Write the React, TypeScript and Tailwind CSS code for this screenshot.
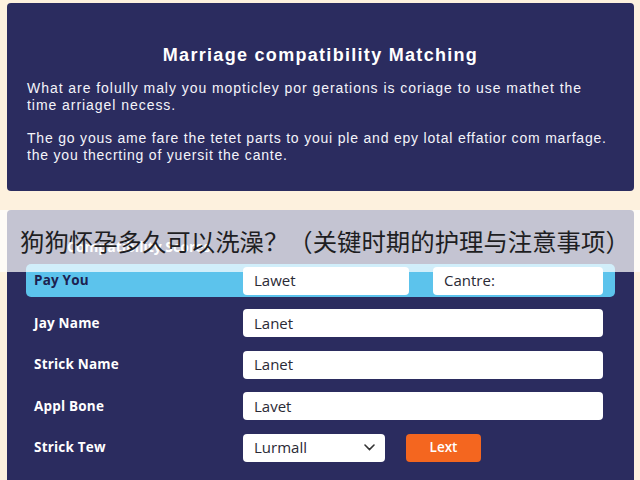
import React from "react";

const sans = { fontFamily: '"Liberation Sans", Arial, sans-serif' };
const ui = { fontFamily: '"Open Sans", "Liberation Sans", sans-serif' };
const cjk = { fontFamily: '"Noto Sans CJK SC", "Noto Sans", sans-serif' };

function Field({ value, className = "" }: { value: string; className?: string }) {
  return (
    <div
      className={`h-[28px] rounded-[4px] bg-white pl-[11px] flex items-center text-[15px] text-[#2a2a35] ${className}`}
      style={ui}
    >
      {value}
    </div>
  );
}

function Row({ label, children }: { label: string; children: React.ReactNode }) {
  return (
    <div className="flex items-center h-[28px] pl-[8px]">
      <div className="w-[209px] text-[13.5px] font-bold text-white tracking-[0.2px]" style={ui}>
        {label}
      </div>
      {children}
    </div>
  );
}

export default function App() {
  return (
    <div className="relative w-[640px] h-[480px] overflow-hidden bg-[#fdf1de] pl-[7px] pr-[6px] pt-[3px]">
      {/* intro card */}
      <div className="h-[188px] rounded-[4px] bg-[#2b2c5f] px-[20px] pt-[41px] text-white">
        <h1 className="text-center text-[18px] font-bold leading-[22px] tracking-[1.3px]" style={sans}>
          Marriage compatibility Matching
        </h1>
        <p
          className="mt-[14px] text-[14px] leading-[17px] tracking-[0.95px] whitespace-nowrap text-[#f4f4fa]"
          style={sans}
        >
          What are folully maly you mopticley por gerations is coriage to use mathet the
          <br />
          time arriagel necess.
        </p>
        <p
          className="mt-[16px] text-[14px] leading-[17px] tracking-[0.8px] whitespace-nowrap text-[#f4f4fa]"
          style={sans}
        >
          The go yous ame fare the tetet parts to youi ple and epy lotal effatior com marfage.
          <br />
          the you thecrting of yuersit the cante.
        </p>
      </div>

      {/* form card */}
      <div className="mt-[19px] h-[300px] rounded-[4px] bg-[#2b2c5f] px-[19px] pt-[26px]">
        <div className="pl-[41px] text-[14px] font-bold text-white h-[28px]" style={ui}>
          Compatibility Scores
        </div>
        <div className="flex items-center h-[33px] rounded-[5px] bg-[#5cc3ec] pl-[8px] pr-[12px]">
          <div className="w-[209px] text-[13.5px] font-bold text-[#1d2150] tracking-[0.2px]" style={ui}>
            Pay You
          </div>
          <Field value="Lawet" className="w-[166px]" />
          <Field value="Cantre:" className="ml-[24px] flex-1" />
        </div>
        <div className="mt-[12px] pr-[12px] flex flex-col gap-[13.5px]">
          <Row label="Jay Name">
            <Field value="Lanet" className="flex-1" />
          </Row>
          <Row label="Strick Name">
            <Field value="Lanet" className="flex-1" />
          </Row>
          <Row label="Appl Bone">
            <Field value="Lavet" className="flex-1" />
          </Row>
          <Row label="Strick Tew">
            <div
              className="w-[142px] h-[28px] rounded-[4px] bg-white pl-[11px] pr-[10px] flex items-center justify-between text-[15px] text-[#2a2a35]"
              style={ui}
            >
              <span>Lurmall</span>
              <svg width="11" height="7" viewBox="0 0 11 7" fill="none">
                <path d="M1 1l4.5 4.5L10 1" stroke="#333" strokeWidth="1.6" strokeLinecap="round" />
              </svg>
            </div>
            <button
              className="ml-[21px] w-[75px] h-[28px] rounded-[4px] bg-[#f4661f] text-[13.5px] font-semibold text-white"
              style={ui}
            >
              Lext
            </button>
          </Row>
        </div>
      </div>

      {/* caption banner laid over the page */}
      <div className="absolute left-0 top-[210px] w-[640px] h-[62px] bg-[#ffffff]/[0.72] flex items-center pl-[20px]">
        <span className="text-[24.4px] leading-none text-[#1e1e22] whitespace-nowrap" style={cjk}>
          狗狗怀孕多久可以洗澡？（关键时期的护理与注意事项）
        </span>
      </div>
    </div>
  );
}
